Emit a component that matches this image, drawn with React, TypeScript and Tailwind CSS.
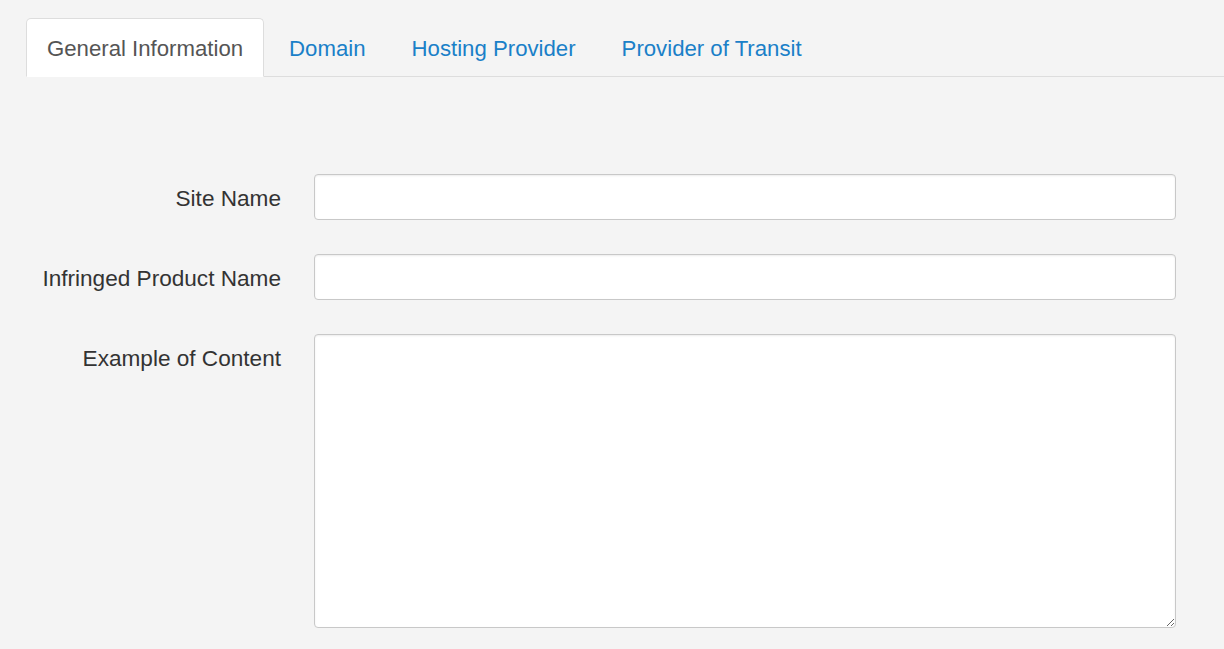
const tabs = ["General Information", "Domain", "Hosting Provider", "Provider of Transit"];

function Field({ label, tall }: { label: string; tall?: boolean }) {
  return (
    <>
      <div className="h-[46px] pt-[3px] flex items-center justify-end text-[22.6px] text-[#333]">{label}</div>
      {tall ? (
        <textarea className="block w-full h-[294px] bg-white border border-[#c8c8c8] rounded-[4px] shadow-[inset_0_1px_2px_rgba(0,0,0,0.08)] outline-none" />
      ) : (
        <input
          type="text"
          className="block w-full h-[46px] bg-white border border-[#c8c8c8] rounded-[4px] shadow-[inset_0_1px_2px_rgba(0,0,0,0.08)] outline-none"
        />
      )}
    </>
  );
}

export default function App() {
  return (
    <div className="min-h-screen bg-[#f4f4f4] font-['Liberation_Sans',Arial,sans-serif]">
      <ul className="ml-[26px] pt-[18px] flex border-b border-[#ddd]">
        {tabs.map((t, i) => (
          <li key={t} className="mr-[4px] -mb-px">
            <a
              href="#"
              className={
                i === 0
                  ? "h-[59px] pt-[2px] flex items-center px-[20px] text-[22.2px] text-[#555] bg-white border border-[#ddd] border-b-white rounded-t-[5px]"
                  : "h-[59px] pt-[2px] flex items-center px-[20px] text-[22.2px] text-[#1a80c8] border border-transparent"
              }
            >
              {t}
            </a>
          </li>
        ))}
      </ul>

      <form className="pt-[97px] pl-[26px] grid grid-cols-[255px_862px] gap-x-[33px] gap-y-[34px] pb-[20px]">
        <Field label="Site Name" />
        <Field label="Infringed Product Name" />
        <Field label="Example of Content" tall />
      </form>
    </div>
  );
}
